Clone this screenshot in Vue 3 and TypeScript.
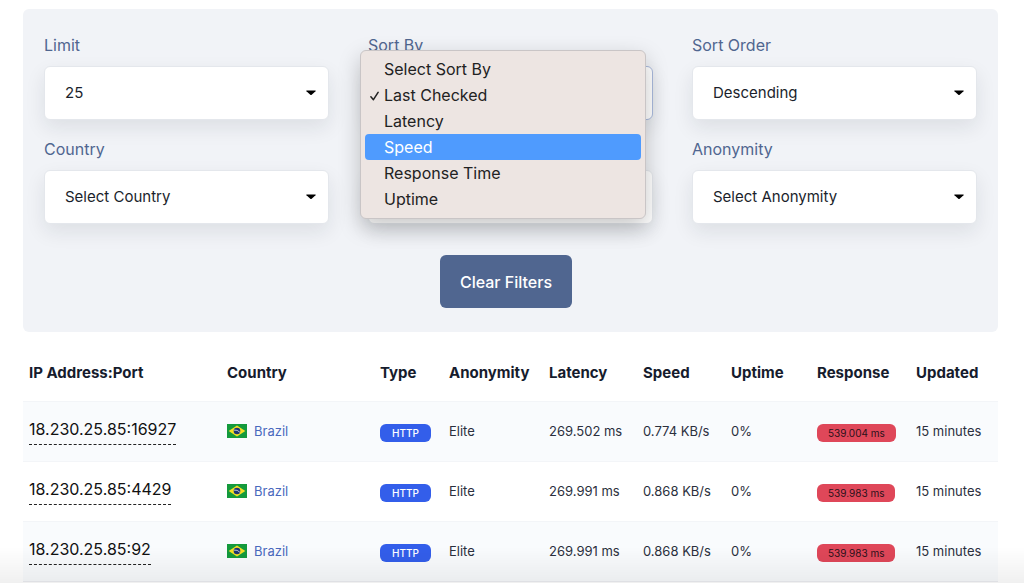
<script setup lang="ts">
import { ref } from 'vue'

interface Field {
  id: string
  name: string
  labelled: boolean
  value: string
}

interface Proxy {
  ip: string
  latency: string
  speed: string
  response: string
}

const fields: Field[] = [
  { id: 'limit', name: 'Limit', labelled: true, value: '25' },
  { id: 'sort-by', name: 'Sort By', labelled: true, value: '' },
  { id: 'sort-order', name: 'Sort Order', labelled: true, value: 'Descending' },
  { id: 'country', name: 'Country', labelled: true, value: 'Select Country' },
  { id: 'type', name: 'Type', labelled: false, value: '' },
  { id: 'anonymity', name: 'Anonymity', labelled: true, value: 'Select Anonymity' },
]

const sortOptions: string[] = ['Select Sort By', 'Last Checked', 'Latency', 'Speed', 'Response Time', 'Uptime']
const selected = ref('Last Checked')
const highlighted = ref('Speed')

const columns: string[] = ['IP Address:Port', 'Country', 'Type', 'Anonymity', 'Latency', 'Speed', 'Uptime', 'Response', 'Updated']

const proxies: Proxy[] = [
  { ip: '18.230.25.85:16927', latency: '269.502 ms', speed: '0.774 KB/s', response: '539.004 ms' },
  { ip: '18.230.25.85:4429', latency: '269.991 ms', speed: '0.868 KB/s', response: '539.983 ms' },
  { ip: '18.230.25.85:92', latency: '269.991 ms', speed: '0.868 KB/s', response: '539.983 ms' },
]
</script>

<template>
  <main class="page">
    <form class="filters" @submit.prevent>
      <div class="grid">
        <div v-for="field in fields" :key="field.id" class="field">
          <label v-if="field.labelled" :for="field.id">{{ field.name }}</label>
          <div class="control">
            <select :id="field.id" :class="{ open: field.id === 'sort-by' }" :aria-label="field.labelled ? undefined : field.name">
              <option>{{ field.value }}</option>
            </select>
            <svg class="caret" viewBox="0 0 10 6" aria-hidden="true"><path d="M0.6 0.5H9.4Q10 0.7 9.5 1.2L5.7 4.8Q5 5.3 4.3 4.8L0.5 1.2Q0 0.7 0.6 0.5Z" /></svg>
          </div>
          <ul v-if="field.id === 'sort-by'" class="menu" role="listbox" aria-label="Sort By">
            <li
              v-for="option in sortOptions"
              :key="option"
              role="option"
              :aria-selected="option === selected"
              :class="{ active: option === highlighted }"
              @mouseenter="highlighted = option"
              @click="selected = option"
            >
              <svg v-if="option === selected" class="check" viewBox="0 0 10 11" aria-hidden="true"><path d="M1 6.4L3.8 9.6L9 1.4" /></svg>
              {{ option }}
            </li>
          </ul>
        </div>
      </div>
      <button type="button" class="clear">Clear Filters</button>
    </form>

    <table class="proxies">
      <colgroup>
        <col class="w-ip" /><col class="w-country" /><col class="w-type" /><col class="w-anonymity" /><col class="w-latency" />
        <col class="w-speed" /><col class="w-uptime" /><col class="w-response" /><col class="w-updated" />
      </colgroup>
      <thead>
        <tr>
          <th v-for="column in columns" :key="column" scope="col">{{ column }}</th>
        </tr>
      </thead>
      <tbody>
        <tr v-for="proxy in proxies" :key="proxy.ip">
          <td><span class="ip">{{ proxy.ip }}</span></td>
          <td>
            <div class="country">
              <svg class="flag" viewBox="0 0 20 14" aria-hidden="true">
                <rect width="20" height="14" fill="#149a3c" />
                <path d="M10 1.5L18.3 7L10 12.5L1.7 7Z" fill="#f3df25" />
                <circle cx="10" cy="7" r="3.3" fill="#1d3473" />
                <path d="M7 6.1Q10.4 5.5 12.9 8.3" fill="none" stroke="#dfe8ef" stroke-width="0.8" />
              </svg>
              <a href="#">Brazil</a>
            </div>
          </td>
          <td><span class="badge http">HTTP</span></td>
          <td>Elite</td>
          <td>{{ proxy.latency }}</td>
          <td>{{ proxy.speed }}</td>
          <td>0%</td>
          <td><span class="badge slow">{{ proxy.response }}</span></td>
          <td>15 minutes</td>
        </tr>
      </tbody>
    </table>
    <div class="fade"></div>
  </main>
</template>

<style>
body {
  background: #fff;
}
</style>

<style scoped>
.page {
  padding: 9px 26px 0 23px;
  font-family: Inter, "Liberation Sans", sans-serif;
  font-size: 16px;
  color: #1b1f2c;
}

.filters {
  display: flex;
  flex-direction: column;
  align-items: center;
  gap: 31px;
  padding: 24px 21px;
  border-radius: 6px;
  background: #f1f3f7;
}

.grid {
  display: grid;
  grid-template-columns: repeat(3, 1fr);
  gap: 17px 39px;
  width: 100%;
}

.field {
  position: relative;
  display: flex;
  flex-direction: column;
  justify-content: flex-end;
  gap: 9px;
}

label {
  font-size: 16px;
  line-height: 24px;
  color: #506690;
}

.control {
  display: grid;
  align-items: center;
}

select {
  grid-area: 1 / 1;
  appearance: none;
  width: 100%;
  height: 54px;
  padding: 0 20px 2px;
  border: 1px solid #e4e7ec;
  border-radius: 6px;
  background: #fff;
  box-shadow: 0 8px 20px rgba(22, 28, 45, 0.09);
  font: inherit;
  font-size: 15px;
  color: #1b1f2c;
}

select.open {
  border-color: #a9b9dc;
}

.caret {
  grid-area: 1 / 1;
  justify-self: end;
  width: 10px;
  height: 6px;
  margin-right: 13px;
  pointer-events: none;
}

.menu {
  position: absolute;
  z-index: 1;
  top: 17px;
  left: -8px;
  right: 7px;
  margin: 0;
  padding: 5px 4px 6px;
  border: 1px solid #c9c5c6;
  border-radius: 6px;
  background: #ede5e2;
  box-shadow: 0 8px 22px rgba(0, 0, 0, 0.22);
  list-style: none;
}

.menu li {
  position: relative;
  padding-left: 19px;
  border-radius: 4px;
  font-size: 16px;
  line-height: 26px;
  color: #222;
}

.menu li.active {
  background: #4f9bfe;
  color: #fff;
}

.check {
  position: absolute;
  top: 9px;
  left: 5px;
  width: 9px;
  height: 10px;
  fill: none;
  stroke: #222;
  stroke-width: 1.7;
  stroke-linecap: round;
  stroke-linejoin: round;
}

.clear {
  height: 53px;
  margin-right: 9px;
  padding: 0 20px;
  border: 0;
  border-radius: 6px;
  background: #506690;
  font: inherit;
  font-weight: 500;
  color: #fff;
}

.proxies {
  width: 100%;
  margin-top: 10px;
  border-collapse: collapse;
  table-layout: fixed;
}

.w-ip { width: 198px; }
.w-country { width: 153px; }
.w-type { width: 69px; }
.w-anonymity { width: 100px; }
.w-latency { width: 94px; }
.w-speed { width: 88px; }
.w-uptime { width: 86px; }
.w-response { width: 99px; }
.w-updated { width: 88px; }

th,
td {
  padding: 0 6px;
  text-align: left;
  white-space: nowrap;
}

th {
  height: 57px;
  padding-top: 2px;
  font-size: 15px;
  font-weight: 700;
  color: #161c2d;
}

td {
  height: 57px;
  padding-bottom: 2px;
  border-top: 1px solid #f3f5f8;
  font-size: 13px;
  color: #2b303d;
}

tbody tr:nth-child(odd) {
  background: #f9fbfd;
}

tbody tr:last-child td {
  border-bottom: 1px solid #eceef2;
}

.ip {
  display: inline-block;
  padding-bottom: 3px;
  border-bottom: 1px dashed #222;
  font-size: 16px;
  line-height: 24px;
  color: #111;
}

.country {
  display: flex;
  align-items: center;
  gap: 7px;
}

.flag {
  width: 20px;
  height: 14px;
}

a {
  color: #4a69bd;
  text-decoration: none;
}

.badge {
  display: inline-block;
  margin-top: 4px;
  border-radius: 6px;
  font-size: 10px;
  line-height: 18px;
}

.http {
  padding: 0 12px;
  background: #335eea;
  font-weight: 500;
  color: #fff;
}

.slow {
  padding: 0 11px;
  background: #df4759;
  color: #2b1119;
}

.fade {
  position: fixed;
  right: 0;
  bottom: 0;
  left: 0;
  height: 36px;
  background: linear-gradient(rgba(0, 0, 0, 0), rgba(0, 0, 0, 0.06));
  pointer-events: none;
}
</style>
